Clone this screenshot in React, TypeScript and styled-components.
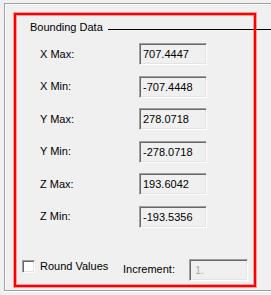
import React from 'react';
import styled, { createGlobalStyle } from 'styled-components';

const GlobalStyle = createGlobalStyle`
  html, body {
    margin: 0;
    padding: 0;
    background: #f0f0f0;
    overflow: hidden;
  }
  body {
    font-family: "Liberation Sans", Arial, sans-serif;
    font-size: 11px;
    color: #000000;
  }
`;

interface BoundRow {
  label: string;
  value: string;
}

const rows: BoundRow[] = [
  { label: 'X Max:', value: '707.4447' },
  { label: 'X Min:', value: '-707.4448' },
  { label: 'Y Max:', value: '278.0718' },
  { label: 'Y Min:', value: '-278.0718' },
  { label: 'Z Max:', value: '193.6042' },
  { label: 'Z Min:', value: '-193.5356' },
];

const App = () => (
  <Page>
    <GlobalStyle />
    <Frame>
      <Header>
        <HeaderText>Bounding Data</HeaderText>
        <HeaderLine />
      </Header>
      <Grid>
        {rows.map((row) => (
          <React.Fragment key={row.label}>
            <Label>{row.label}</Label>
            <Field>{row.value}</Field>
          </React.Fragment>
        ))}
      </Grid>
      <Footer>
        <CheckWrap>
          <CheckBox />
          <span>Round Values</span>
        </CheckWrap>
        <IncLabel>Increment:</IncLabel>
        <Field $disabled $width={59}>1.</Field>
      </Footer>
      <Highlight />
    </Frame>
  </Page>
);

export default App;

const Page = styled.div`
  width: 271px;
  height: 295px;
  overflow: hidden;
  padding: 3px 0 0 4px;
  box-sizing: border-box;
`;

const Frame = styled.div`
  position: relative;
  display: flex;
  flex-direction: column;
  width: 275px;
  height: 288px;
  box-sizing: border-box;
  border: 1px solid #a0a0a0;
  border-right: none;
  box-shadow: inset 1px 1px 0 #ffffff, 0 1px 0 #ffffff;
`;

const Header = styled.div`
  display: flex;
  align-items: flex-start;
  padding: 17px 0 0 25px;
  height: 13px;
`;

const HeaderText = styled.span`
  line-height: 13px;
  white-space: nowrap;
`;

const HeaderLine = styled.div`
  flex: 1;
  height: 1px;
  margin: 8px 0 0 5px;
  background: #000000;
`;

const Grid = styled.div`
  display: grid;
  grid-template-columns: 99px 68px;
  grid-auto-rows: 22px;
  row-gap: 10.5px;
  align-items: center;
  margin: 9px 0 0 35px;
`;

const Label = styled.span`
  line-height: 13px;
`;

const Field = styled.div<{ $disabled?: boolean; $width?: number }>`
  width: ${(p) => p.$width ?? 68}px;
  height: 22px;
  box-sizing: border-box;
  padding-left: ${(p) => (p.$disabled ? 5 : 3)}px;
  border: 1px solid;
  border-color: #a0a0a0 #ffffff #ffffff #a0a0a0;
  box-shadow: inset 1px 1px 0 #696969, inset -1px -1px 0 #e3e3e3;
  background: #f0f0f0;
  color: ${(p) => (p.$disabled ? '#aca899' : '#000000')};
  line-height: 19px;
  padding-top: 1px;
  white-space: nowrap;
`;

const Footer = styled.div`
  display: flex;
  align-items: flex-start;
  margin: auto 0 9px 17px;
  height: 22px;
`;

const CheckWrap = styled.label`
  display: flex;
  align-items: center;
  gap: 5px;
  margin-top: 1px;
  width: 101px;
  line-height: 13px;
`;

const CheckBox = styled.span`
  display: block;
  width: 13px;
  height: 13px;
  box-sizing: border-box;
  border: 1px solid;
  border-color: #a0a0a0 #ffffff #ffffff #a0a0a0;
  box-shadow: inset 1px 1px 0 #696969, inset -1px -1px 0 #e3e3e3;
  background: #ffffff;
`;

const IncLabel = styled.span`
  margin-top: 4px;
  width: 66px;
  line-height: 13px;
`;

const Highlight = styled.div`
  position: absolute;
  left: 9px;
  top: 9px;
  width: 242px;
  height: 274px;
  box-sizing: border-box;
  border: 2px solid #ff0000;
  box-shadow: 0 0 0 1px rgba(255, 0, 0, 0.35), inset 0 0 0 1px rgba(255, 0, 0, 0.35);
  pointer-events: none;
`;
